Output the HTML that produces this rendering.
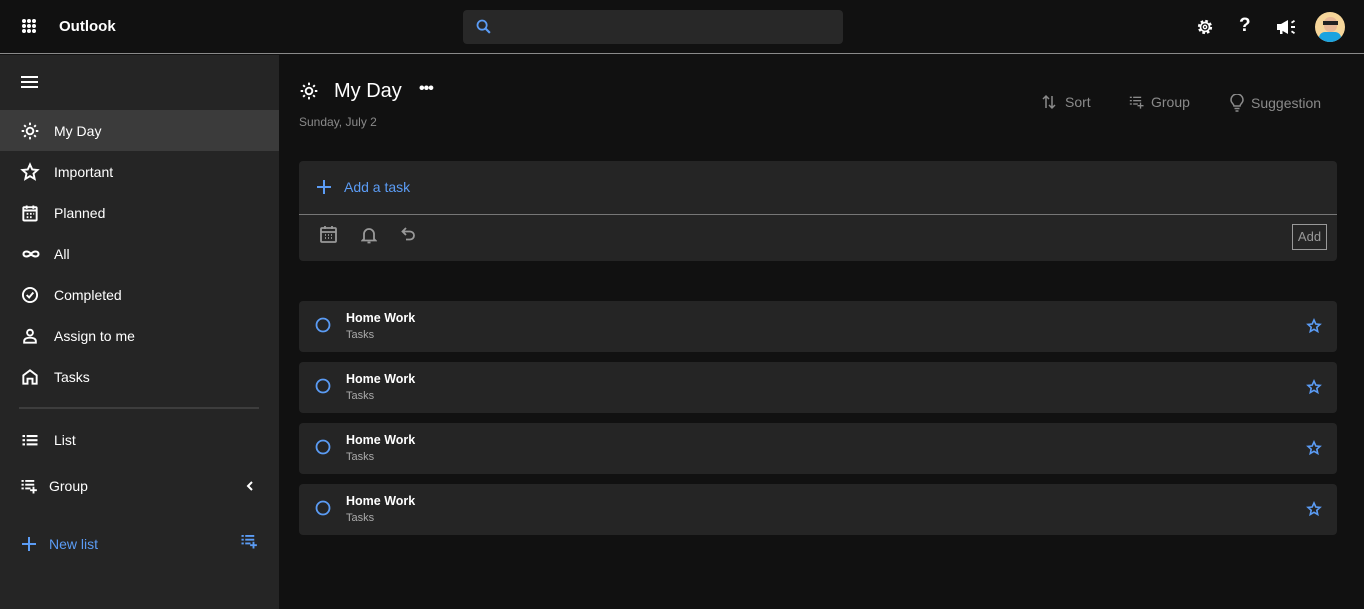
<!DOCTYPE html>
<html><head><style>
*{margin:0;padding:0;box-sizing:border-box}
body{width:1364px;height:609px;background:#111;font-family:"Liberation Sans",sans-serif;color:#fff;position:relative;overflow:hidden}
.top{position:absolute;left:0;top:0;width:1364px;height:54px;background:#111;border-bottom:1px solid #8a8a8a}
.side{position:absolute;left:0;top:55px;width:279px;height:554px;background:#252525}
.abs{position:absolute}
.item{position:absolute;left:0;width:279px;height:41px;display:flex;align-items:center;font-size:14px}
.item svg{position:absolute;left:20px}
.item span{position:absolute;left:54px}
.card{position:absolute;left:299px;width:1038px;background:#252525;border-radius:4px}
.task{height:51px}
.task .t{position:absolute;left:47px;top:10px;font-size:12.5px;font-weight:bold}
.task .s{position:absolute;left:47px;top:28px;font-size:11px;color:#aaa}
.tb{position:absolute;top:94px;font-size:14px;color:#8a8a8a;display:flex;align-items:center;gap:6px}
</style></head><body>
<div class="top">
<svg class="abs" style="left:22px;top:19px" width="14" height="14" viewBox="0 0 14 14" fill="#fff"><circle cx="2" cy="2" r="2"/><circle cx="7" cy="2" r="2"/><circle cx="12" cy="2" r="2"/><circle cx="2" cy="7" r="2"/><circle cx="7" cy="7" r="2"/><circle cx="12" cy="7" r="2"/><circle cx="2" cy="12" r="2"/><circle cx="7" cy="12" r="2"/><circle cx="12" cy="12" r="2"/></svg>
<div class="abs" style="left:59px;top:18px;font-size:15px;font-weight:bold">Outlook</div>
<div class="abs" style="left:463px;top:10px;width:380px;height:34px;background:#282828;border-radius:4px"></div>
<svg class="abs" style="left:475px;top:18px" width="17" height="17" viewBox="0 0 24 24"><circle cx="10" cy="10" r="6.5" fill="none" stroke="#5b9cf5" stroke-width="2.5"/><path d="M15 15l6 6" stroke="#5b9cf5" stroke-width="3"/></svg>
<svg class="abs" style="left:1196px;top:18px" width="18" height="18" viewBox="0 0 24 24"><circle cx="12" cy="12" r="8" fill="none" stroke="#fff" stroke-width="3" stroke-dasharray="3.5 2.8"/><circle cx="12" cy="12" r="6" fill="none" stroke="#fff" stroke-width="2.2"/><circle cx="12" cy="12" r="2.2" fill="none" stroke="#fff" stroke-width="1.8"/></svg>
<div class="abs" style="left:1239px;top:15px;font-size:19px;font-weight:bold">?</div>
<svg class="abs" style="left:1276px;top:18px" width="20" height="18" viewBox="0 0 20 18" fill="#fff"><path d="M1 6h4l7-4v14l-7-4H1z"/><rect x="4" y="12" width="2.5" height="4"/><path d="M15 8h4v2h-4zM15 4l3-2 1 1.5-3 2zM15 14l3 2 1-1.5-3-2z"/></svg>
<div class="abs" style="left:1315px;top:12px;width:30px;height:30px;border-radius:50%;background:#f6d69a;overflow:hidden">
<div class="abs" style="left:9px;top:5px;width:13px;height:15px;border-radius:6px;background:#e8b896"></div>
<div class="abs" style="left:8px;top:9px;width:15px;height:4px;background:#222"></div>
<div class="abs" style="left:4px;top:20px;width:22px;height:12px;border-radius:6px 6px 0 0;background:#1aa3e0"></div></div>
</div>
<div class="side">
<svg class="abs" style="left:21px;top:21px" width="17" height="13" viewBox="0 0 17 13" fill="#fff"><rect y="0" width="17" height="2"/><rect y="5" width="17" height="2"/><rect y="10" width="17" height="2"/></svg>
<div class="item" style="top:55px;background:#3b3b3b"><svg width="20" height="20" viewBox="0 0 24 24" fill="none" stroke="#fff" stroke-width="2.3"><circle cx="12" cy="12" r="4"/><path d="M12 2v3M12 19v3M2 12h3M19 12h3M5 5l2 2M17 17l2 2M5 19l2-2M17 7l2-2"/></svg><span>My Day</span></div>
<div class="item" style="top:96px"><svg width="20" height="20" viewBox="0 0 24 24" fill="none" stroke="#fff" stroke-width="2.3"><path d="M12 3l2.7 6 6.3.6-4.8 4.3 1.4 6.4L12 17l-5.6 3.3 1.4-6.4L3 9.6 9.3 9z"/></svg><span>Important</span></div>
<div class="item" style="top:137px"><svg width="20" height="20" viewBox="0 0 24 24" fill="none" stroke="#fff" stroke-width="2.3"><rect x="4" y="5" width="16" height="16" rx="1"/><path d="M4 9h16M8 3v4M16 3v4M8 13h2M12 13h2M16 13h1M8 17h2M12 17h2"/></svg><span>Planned</span></div>
<div class="item" style="top:178px"><svg width="22" height="20" viewBox="0 0 24 24" fill="none" stroke="#fff" stroke-width="2.5"><path d="M12 12c-3-4-9-4-9 0s6 4 9 0 9-4 9 0-6 4-9 0z"/></svg><span>All</span></div>
<div class="item" style="top:219px"><svg width="20" height="20" viewBox="0 0 24 24" fill="none" stroke="#fff" stroke-width="2.3"><circle cx="12" cy="12" r="8.5"/><path d="M8 12l3 3 5-6"/></svg><span>Completed</span></div>
<div class="item" style="top:260px"><svg width="20" height="20" viewBox="0 0 24 24" fill="none" stroke="#fff" stroke-width="2.3"><circle cx="12" cy="8" r="3.5"/><path d="M5 20v-2c0-3 4-4 7-4s7 1 7 4v2z"/></svg><span>Assign to me</span></div>
<div class="item" style="top:301px"><svg width="20" height="20" viewBox="0 0 24 24" fill="none" stroke="#fff" stroke-width="2.3"><path d="M4 20V10l8-6 8 6v10h-5v-6H9v6z"/></svg><span>Tasks</span></div>
<div class="abs" style="left:19px;top:352px;width:240px;height:2px;background:#3d3d3d"></div>
<div class="item" style="top:364px"><svg width="20" height="20" viewBox="0 0 24 24" fill="#fff"><rect x="3" y="6" width="3" height="2.5"/><rect x="8" y="6" width="13" height="2.5"/><rect x="3" y="11" width="3" height="2.5"/><rect x="8" y="11" width="13" height="2.5"/><rect x="3" y="16" width="3" height="2.5"/><rect x="8" y="16" width="13" height="2.5"/></svg><span>List</span></div>
<div class="item" style="top:410px"><svg width="18" height="18" viewBox="0 0 24 24" fill="#fff"><rect x="2" y="4" width="3" height="2.5"/><rect x="7" y="4" width="12" height="2.5"/><rect x="2" y="9" width="3" height="2.5"/><rect x="7" y="9" width="12" height="2.5"/><rect x="2" y="14" width="3" height="2.5"/><rect x="7" y="14" width="7" height="2.5"/><path d="M18 13v9M13.5 17.5h9" stroke="#fff" stroke-width="2.5"/></svg><span style="left:49px">Group</span>
<svg style="left:244px" width="12" height="12" viewBox="0 0 12 12" fill="none" stroke="#fff" stroke-width="2"><path d="M8 2L4 6l4 4"/></svg></div>
<div class="item" style="top:468px;color:#5b9cf5"><svg style="left:21px" width="16" height="16" viewBox="0 0 16 16" stroke="#5b9cf5" stroke-width="2"><path d="M8 1v14M1 8h14"/></svg><span style="left:49px">New list</span>
<svg style="left:240px;top:9px" width="18" height="18" viewBox="0 0 24 24" fill="#5b9cf5"><rect x="2" y="4" width="3" height="2.5"/><rect x="7" y="4" width="12" height="2.5"/><rect x="2" y="9" width="3" height="2.5"/><rect x="7" y="9" width="12" height="2.5"/><rect x="2" y="14" width="3" height="2.5"/><rect x="7" y="14" width="7" height="2.5"/><path d="M18 13v9M13.5 17.5h9" stroke="#5b9cf5" stroke-width="2.5"/></svg></div>
</div>

<svg class="abs" style="left:299px;top:81px" width="20" height="20" viewBox="0 0 24 24" fill="none" stroke="#fff" stroke-width="2.3"><circle cx="12" cy="12" r="4"/><path d="M12 2v3M12 19v3M2 12h3M19 12h3M5 5l2 2M17 17l2 2M5 19l2-2M17 7l2-2"/></svg>
<div class="abs" style="left:334px;top:80px;font-size:20px">My Day</div>
<div class="abs" style="left:419px;top:80px;font-size:16px;font-weight:bold;letter-spacing:-1px">•••</div>
<div class="abs" style="left:299px;top:115px;font-size:12px;color:#8a8a8a">Sunday, July 2</div>
<div class="tb" style="left:1041px"><svg width="16" height="16" viewBox="0 0 16 16" fill="none" stroke="#8a8a8a" stroke-width="1.5"><path d="M5 14V2M2 5l3-3 3 3M11 2v12M8 11l3 3 3-3"/></svg><span style="margin-left:2px">Sort</span></div>
<div class="tb" style="left:1128px"><svg width="17" height="16" viewBox="0 0 24 24" fill="#8a8a8a"><rect x="2" y="4" width="3" height="2"/><rect x="7" y="4" width="12" height="2"/><rect x="2" y="9" width="3" height="2"/><rect x="7" y="9" width="12" height="2"/><rect x="2" y="14" width="3" height="2"/><rect x="7" y="14" width="7" height="2"/><path d="M18 13v9M13.5 17.5h9" stroke="#8a8a8a" stroke-width="2"/></svg><span>Group</span></div>
<div class="tb" style="left:1229px"><svg width="16" height="18" viewBox="0 0 16 18" fill="none" stroke="#8a8a8a" stroke-width="1.5"><path d="M5 12c0-2-3-3-3-6a6 6 0 0112 0c0 3-3 4-3 6zM5.5 14.5h5M6.5 17h3"/></svg><span>Suggestion</span></div>

<div class="card" style="top:161px;height:100px">
<svg class="abs" style="left:18px;top:19px" width="14" height="14" viewBox="0 0 14 14" stroke="#5b9cf5" stroke-width="2"><path d="M7 0v14M0 7h14"/></svg>
<div class="abs" style="left:45px;top:18px;font-size:14px;color:#5b9cf5">Add a task</div>
<div class="abs" style="left:0;top:53px;width:1038px;height:1px;background:#777"></div>
<svg class="abs" style="left:21px;top:64px" width="17" height="18" viewBox="0 0 17 18" fill="none" stroke="#999" stroke-width="1.8"><rect x="1" y="3" width="15" height="14" rx="1"/><path d="M1 7h15M5 1v3M12 1v3M5 10h1M8 10h1M11 10h1M5 13h1M8 13h1M11 13h1"/></svg>
<svg class="abs" style="left:62px;top:65px" width="16" height="18" viewBox="0 0 16 18" fill="none" stroke="#999" stroke-width="1.8"><path d="M3 13V8a5 5 0 0110 0v5l1.5 1.5h-13zM6.5 16.5h3"/></svg>
<svg class="abs" style="left:102px;top:66px" width="16" height="14" viewBox="0 0 16 14" fill="none" stroke="#999" stroke-width="1.8"><path d="M5 1L1.5 4.5 5 8M2 4.5h7a4 4 0 010 8H5"/></svg>
<div class="abs" style="left:993px;top:63px;width:35px;height:26px;border:1px solid #999;font-size:13px;color:#999;text-align:center;line-height:24px">Add</div>
</div>

<div class="card task" style="top:301px"><svg class="abs" style="left:16px;top:16px" width="16" height="16"><circle cx="8" cy="8" r="6.5" fill="none" stroke="#5b9cf5" stroke-width="1.8"/></svg><div class="t">Home Work</div><div class="s">Tasks</div><svg class="abs" style="left:1007px;top:17px" width="16" height="16" viewBox="0 0 24 24" fill="none" stroke="#5b9cf5" stroke-width="2.4"><path d="M12 3l2.7 6 6.3.6-4.8 4.3 1.4 6.4L12 17l-5.6 3.3 1.4-6.4L3 9.6 9.3 9z"/></svg></div>
<div class="card task" style="top:362px"><svg class="abs" style="left:16px;top:16px" width="16" height="16"><circle cx="8" cy="8" r="6.5" fill="none" stroke="#5b9cf5" stroke-width="1.8"/></svg><div class="t">Home Work</div><div class="s">Tasks</div><svg class="abs" style="left:1007px;top:17px" width="16" height="16" viewBox="0 0 24 24" fill="none" stroke="#5b9cf5" stroke-width="2.4"><path d="M12 3l2.7 6 6.3.6-4.8 4.3 1.4 6.4L12 17l-5.6 3.3 1.4-6.4L3 9.6 9.3 9z"/></svg></div>
<div class="card task" style="top:423px"><svg class="abs" style="left:16px;top:16px" width="16" height="16"><circle cx="8" cy="8" r="6.5" fill="none" stroke="#5b9cf5" stroke-width="1.8"/></svg><div class="t">Home Work</div><div class="s">Tasks</div><svg class="abs" style="left:1007px;top:17px" width="16" height="16" viewBox="0 0 24 24" fill="none" stroke="#5b9cf5" stroke-width="2.4"><path d="M12 3l2.7 6 6.3.6-4.8 4.3 1.4 6.4L12 17l-5.6 3.3 1.4-6.4L3 9.6 9.3 9z"/></svg></div>
<div class="card task" style="top:484px"><svg class="abs" style="left:16px;top:16px" width="16" height="16"><circle cx="8" cy="8" r="6.5" fill="none" stroke="#5b9cf5" stroke-width="1.8"/></svg><div class="t">Home Work</div><div class="s">Tasks</div><svg class="abs" style="left:1007px;top:17px" width="16" height="16" viewBox="0 0 24 24" fill="none" stroke="#5b9cf5" stroke-width="2.4"><path d="M12 3l2.7 6 6.3.6-4.8 4.3 1.4 6.4L12 17l-5.6 3.3 1.4-6.4L3 9.6 9.3 9z"/></svg></div>
</body></html>
